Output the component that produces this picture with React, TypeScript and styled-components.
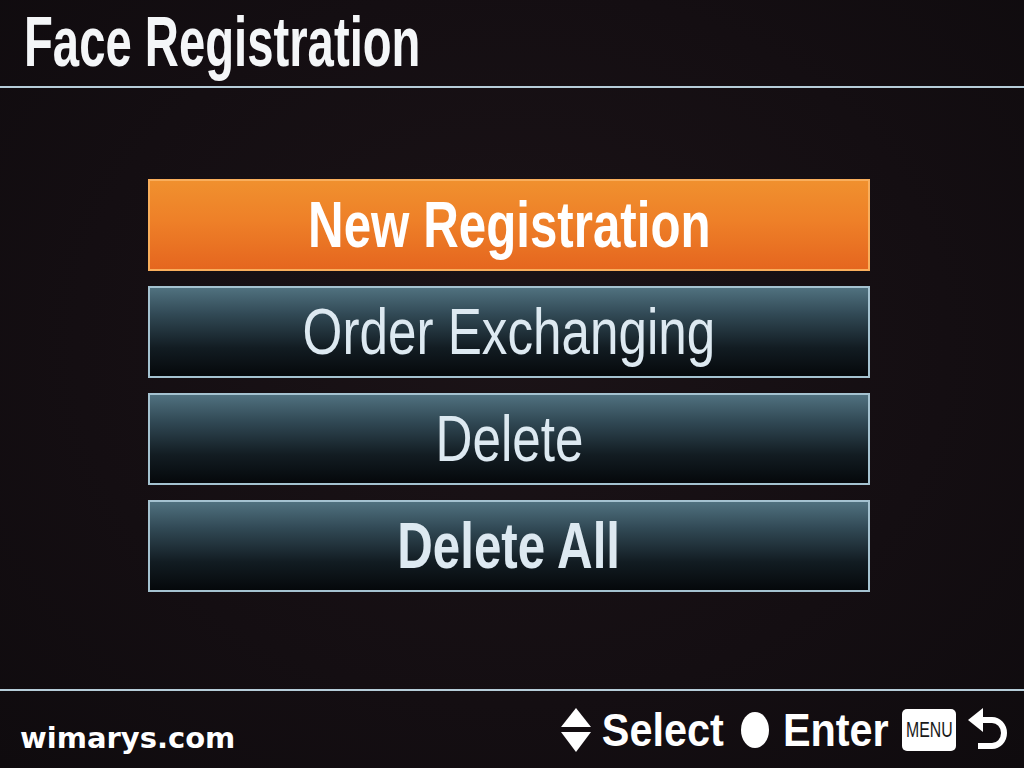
import styled, { createGlobalStyle } from 'styled-components';

const GlobalStyle = createGlobalStyle`
  html, body {
    margin: 0;
    padding: 0;
    background: #140e12;
  }
`;

const menuItems = [
  { label: 'New Registration', selected: true, bold: true },
  { label: 'Order Exchanging', selected: false, bold: false },
  { label: 'Delete', selected: false, bold: false },
  { label: 'Delete All', selected: false, bold: true },
];

export default function App() {
  return (
    <Screen>
      <GlobalStyle />
      <Header>
        <Title>Face Registration</Title>
      </Header>
      <Rule />
      <Menu>
        {menuItems.map((item) => (
          <MenuButton key={item.label} selected={item.selected}>
            <ButtonLabel selected={item.selected} bold={item.bold}>
              {item.label}
            </ButtonLabel>
          </MenuButton>
        ))}
      </Menu>
      <Rule />
      <Footer>
        <Watermark>wimarys.com</Watermark>
        <Hints>
          <svg width="32" height="46" viewBox="0 0 32 46">
            <polygon points="16,1 31,20 1,20" fill="#fff" />
            <polygon points="1,25 31,25 16,45" fill="#fff" />
          </svg>
          <HintText>Select</HintText>
          <Dot />
          <HintText>Enter</HintText>
          <MenuKey>
            <MenuKeyText>MENU</MenuKeyText>
          </MenuKey>
          <svg width="44" height="46" viewBox="0 0 44 46">
            <polygon points="2,13 17,1 17,25" fill="#fff" />
            <path d="M14 13 H26 A12 13 0 0 1 26 39 H12" fill="none" stroke="#fff" strokeWidth="6" />
          </svg>
        </Hints>
      </Footer>
    </Screen>
  );
}

const Screen = styled.div`
  width: 1024px;
  height: 768px;
  display: flex;
  flex-direction: column;
  overflow: hidden;
  background: radial-gradient(ellipse at 50% 45%, #1b1317 0%, #140e12 60%, #0f0b0e 100%);
  font-family: 'Liberation Sans', Arial, sans-serif;
`;

const Header = styled.div`
  height: 86px;
  padding: 2px 0 0 24px;
  box-sizing: border-box;
`;

const Title = styled.div`
  display: inline-block;
  font-size: 70px;
  line-height: 80px;
  font-weight: 700;
  color: #f4f6f8;
  transform: scaleX(0.675);
  transform-origin: left center;
  white-space: nowrap;
`;

const Rule = styled.div`
  height: 2px;
  background: #b6cdd9;
  flex-shrink: 0;
`;

const Menu = styled.div`
  flex: 1;
  display: flex;
  flex-direction: column;
  gap: 15px;
  padding: 91px 0 0 148px;
`;

const MenuButton = styled.div<{ selected: boolean }>`
  width: 722px;
  height: 92px;
  box-sizing: border-box;
  display: flex;
  align-items: center;
  justify-content: center;
  border: 2px solid ${({ selected }) => (selected ? '#f9ae5c' : '#a4c2d0')};
  background: ${({ selected }) =>
    selected
      ? 'linear-gradient(180deg, #f0902e 0%, #ee8028 45%, #e5661f 100%)'
      : 'linear-gradient(180deg, #50717f 0%, #314955 30%, #121c22 68%, #05080b 100%)'};
`;

const ButtonLabel = styled.span<{ selected: boolean; bold: boolean }>`
  display: inline-block;
  font-size: 64px;
  line-height: 1;
  font-weight: ${({ bold }) => (bold ? 700 : 400)};
  color: ${({ selected }) => (selected ? '#ffffff' : '#dde9f1')};
  transform: scaleX(${({ bold }) => (bold ? 0.77 : 0.8)});
  white-space: nowrap;
`;

const Footer = styled.div`
  height: 77px;
  display: flex;
  align-items: center;
  justify-content: space-between;
  padding: 0 14px 0 20px;
`;

const Watermark = styled.div`
  font-family: 'DejaVu Sans', Verdana, sans-serif;
  font-weight: 700;
  font-size: 29px;
  color: #ffffff;
  padding-top: 16px;
`;

const Hints = styled.div`
  display: flex;
  align-items: center;
  gap: 10px;
`;

const HintText = styled.span`
  display: inline-block;
  font-size: 46px;
  font-weight: 700;
  color: #ffffff;
  transform: scaleX(0.9);
  margin: 0 -7px;
`;

const Dot = styled.span`
  width: 28px;
  height: 36px;
  border-radius: 50%;
  background: #ffffff;
  margin: 0 5px 0 8px;
`;

const MenuKey = styled.span`
  width: 54px;
  height: 42px;
  background: #ffffff;
  border-radius: 5px;
  display: flex;
  align-items: center;
  justify-content: center;
  margin-left: 4px;
  overflow: hidden;
`;

const MenuKeyText = styled.span`
  display: inline-block;
  color: #1a1a1a;
  font-size: 22px;
  transform: scaleX(0.72);
  white-space: nowrap;
`;
